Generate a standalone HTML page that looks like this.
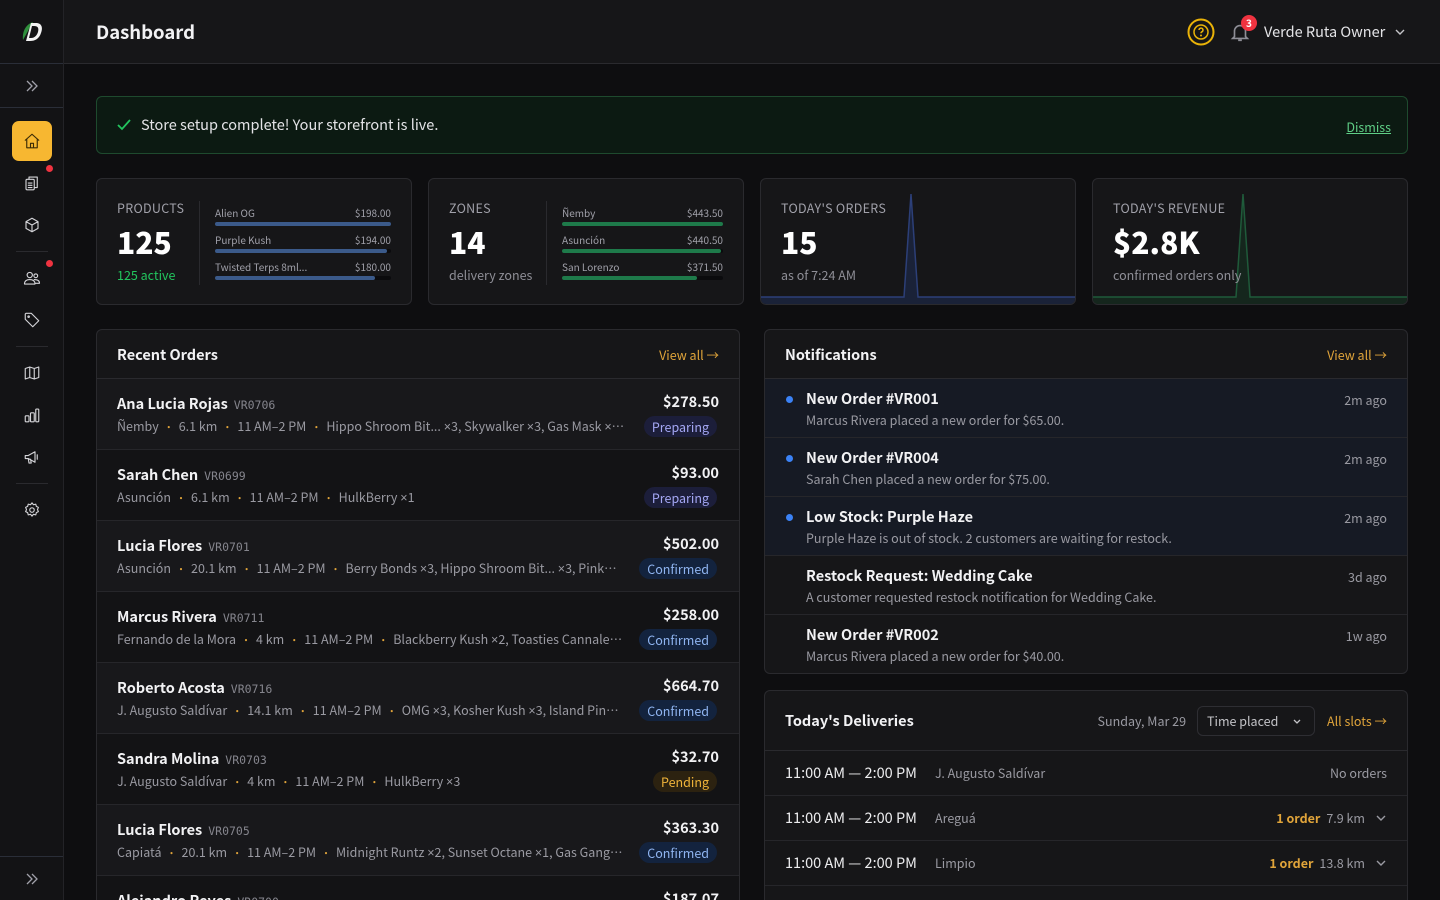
<!DOCTYPE html>
<html><head><meta charset="utf-8"><style>
*{box-sizing:border-box;margin:0;padding:0}
html{width:1440px;height:900px;overflow:hidden}
body{width:1440px;height:900px;overflow:hidden;background:#0e0e10;font-family:"Noto Sans CJK SC","Liberation Sans",sans-serif;color:#e8e8ea;position:relative}
.x{font-family:"Liberation Sans",sans-serif}
.side{position:absolute;left:0;top:0;width:64px;height:900px;background:#131315;border-right:1px solid #232327}
.logo{height:64px;display:flex;align-items:center;justify-content:center;border-bottom:1px solid #2a2e38}
.expand{height:44px;display:flex;align-items:center;justify-content:center;border-bottom:1px solid #2a2e38}
.ic{position:absolute;left:12px;width:40px;height:40px;display:flex;align-items:center;justify-content:center}
.ic svg{width:18px;height:18px;fill:none;stroke:#d4d4d8;stroke-width:1.5;stroke-linecap:round;stroke-linejoin:round}
.dot{position:absolute;width:7px;height:7px;border-radius:50%;background:#ef3340}
.sep{position:absolute;left:16px;width:32px;height:1px;background:#2a2a2e}
.header{position:absolute;left:64px;top:0;right:0;height:64px;background:#161618;border-bottom:1px solid #2a2a2e}
.header h1{position:absolute;left:32px;top:19px;font-size:18.5px;font-weight:700;color:#f2f2f4}
.banner{position:absolute;left:96px;top:96px;width:1312px;height:58px;background:#0c1a12;border:1px solid #1e4a2e;border-radius:6px}
.card{position:absolute;background:#161618;border:1px solid #2a2a2e;border-radius:6px;overflow:hidden}
.cut{border-bottom:none;border-radius:6px 6px 0 0}
.lbl{font-size:12.5px;color:#a1a1aa;letter-spacing:.3px}
.big{font-size:30px;font-weight:800;color:#fff}
.sub{font-size:12.5px;color:#8e8e96}
.bar{position:absolute;font-size:10px;color:#a1a1aa}
.bar .t{position:absolute;left:0;top:0}.bar .v{position:absolute;right:0;top:0}
.bar .tr{position:absolute;left:0;right:0;top:17px;height:4px;background:#0b0b0d;border-radius:2px}
.bar .f{height:4px;border-radius:2px}
.ph{height:49px;border-bottom:1px solid #2a2a2e;display:flex;align-items:center;padding:0 20px;justify-content:space-between}
.ph b{font-size:14.5px;font-weight:700;color:#f2f2f4}
.va{font-size:12.5px;color:#e0a43a}
.row{position:absolute;left:0;right:0;height:71px;border-bottom:1px solid #26262a}
.nm{position:absolute;left:20px;top:14px;font-size:14.5px;font-weight:700;color:#f2f2f4;white-space:nowrap}
.nm span{font-family:"DejaVu Sans Mono","Liberation Mono",monospace;font-weight:400;font-size:11.5px;color:#85858d;margin-left:6px}
.meta{position:absolute;left:20px;top:37px;font-size:12.5px;color:#9a9aa2;white-space:nowrap;width:508px;overflow:hidden;text-overflow:ellipsis}
.meta i{font-style:normal;color:#e0a43a;margin:0 5px;font-size:10px}
.amt{position:absolute;right:20px;top:12px;font-size:14.5px;font-weight:700;color:#f2f2f4}
.pill{position:absolute;right:22px;top:37px;height:21px;padding:0 8px;border-radius:11px;font-size:12.5px;line-height:21px}
.prep{background:#1c1e3a;color:#a5a8f5}.conf{background:#13233e;color:#8fb4f0}.pend{background:#2c2210;color:#f0b43a}
.nr{position:absolute;left:0;right:0;height:59px;border-bottom:1px solid #26262a}
.nr.u{background:#161a24}
.nr .bd{position:absolute;left:21px;top:17px;width:7px;height:7px;border-radius:50%;background:#3b82f6}
.nr .t{position:absolute;left:41px;top:9px;font-size:14.5px;font-weight:700;color:#f2f2f4}
.nr .d{position:absolute;left:41px;top:31px;font-size:12.5px;color:#9a9aa2}
.nr .a{position:absolute;right:20px;top:11px;font-size:12.5px;color:#9a9aa2}
.dr{position:absolute;left:0;right:0;height:45px;border-bottom:1px solid #26262a;font-size:14.5px}
.dr .tm{position:absolute;left:20px;top:11px;color:#ececee}
.dr .z{position:absolute;left:170px;top:12px;font-size:12.5px;color:#9a9aa2}
.dr .r{position:absolute;right:20px;top:12px;font-size:12.5px;color:#9a9aa2;display:flex;align-items:center}
.dr .r b{color:#e0a43a;margin-right:6px}
</style></head><body>
<div class="side">
 <div class="logo"><svg width="28" height="28" viewBox="0 0 28 28"><path d="M5 22 C4 12 9 6 15 4 C12 9 9 15 5 22Z" fill="#2f8f3c"/><path d="M13 5 L18 5 C24 5 25 10 23 15 C21 21 17 23 12 23 L8 23 Z M14 8 L11 20 L13 20 C17 20 19 17 20 14 C21 10 20 8 16 8Z" fill="#f2f2f2"/></svg></div>
 <div class="expand"><svg width="14" height="14" viewBox="0 0 14 14" fill="none" stroke="#a1a1aa" stroke-width="1.3"><path d="M2 2l5 5-5 5M7 2l5 5-5 5"/></svg></div>
 <div class="ic" style="top:121px;background:#f7b731;border-radius:7px"><svg viewBox="0 0 24 24" style="stroke:#3a2a05"><path d="M3 11 12 3l9 8M5 9.5V21h14V9.5M10 21v-6h4v6"/></svg></div>
 <div class="dot" style="left:46px;top:165px"></div>
 <div class="ic" style="top:163px"><svg viewBox="0 0 24 24"><rect x="4" y="7" width="11" height="14" rx="1.5"/><path d="M8 7V4h11v14h-4M7 12h5M7 15h5M7 18h5"/></svg></div>
 <div class="ic" style="top:205px"><svg viewBox="0 0 24 24"><path d="M12 3l8 4.5v9L12 21l-8-4.5v-9zM4 7.5 12 12l8-4.5M12 12v9"/></svg></div>
 <div class="sep" style="top:251px"></div>
 <div class="dot" style="left:46px;top:260px"></div>
 <div class="ic" style="top:258px"><svg viewBox="0 0 24 24"><circle cx="9" cy="8" r="3.5"/><circle cx="17" cy="9" r="2.5"/><path d="M2 20c0-4 3-6 7-6s7 2 7 6zM15 14c4 0 7 1 7 5h-5"/></svg></div>
 <div class="ic" style="top:300px"><svg viewBox="0 0 24 24"><path d="M3 4v7l10 10 8-8L11 3H4z"/><circle cx="7.5" cy="7.5" r="1"/></svg></div>
 <div class="sep" style="top:346px"></div>
 <div class="ic" style="top:353px"><svg viewBox="0 0 24 24"><path d="M3 6l6-2 6 2 6-2v14l-6 2-6-2-6 2zM9 4v14M15 6v14"/></svg></div>
 <div class="ic" style="top:395px"><svg viewBox="0 0 24 24"><rect x="3" y="13" width="5" height="8" rx="1"/><rect x="10" y="9" width="5" height="12" rx="1"/><rect x="17" y="4" width="4" height="17" rx="1"/></svg></div>
 <div class="ic" style="top:437px"><svg viewBox="0 0 24 24"><path d="M3 10v4h4l9 5V5L7 10zM7 14l1 6h3l-1-5M19 9v6"/></svg></div>
 <div class="sep" style="top:483px"></div>
 <div class="ic" style="top:490px"><svg viewBox="0 0 24 24"><circle cx="12" cy="12" r="3"/><path d="M12 2.5l2 2.5 3-.8.8 3 2.7 1.3-1.2 2.9 1.2 2.8-2.7 1.3-.8 3-3-.8-2 2.5-2-2.5-3 .8-.8-3-2.7-1.3 1.2-2.8-1.2-2.9 2.7-1.3.8-3 3 .8z"/></svg></div>
 <div style="position:absolute;left:0;right:0;top:856px;height:44px;border-top:1px solid #2a2e38;display:flex;align-items:center;justify-content:center"><svg width="14" height="14" viewBox="0 0 14 14" fill="none" stroke="#a1a1aa" stroke-width="1.3"><path d="M2 2l5 5-5 5M7 2l5 5-5 5"/></svg></div>
</div>
<div class="header"><h1>Dashboard</h1>
 <svg style="position:absolute;left:1123px;top:18px" width="28" height="28" viewBox="0 0 28 28" fill="none" stroke="#eab308" stroke-width="2"><circle cx="14" cy="14" r="12.5"/><circle cx="14" cy="14" r="7" stroke-width="1.5"/><path d="M12 12a2 2 0 1 1 2.5 2c-.5.3-.5.7-.5 1.3" stroke-width="1.5"/><circle cx="14" cy="17.5" r=".5" stroke-width="1"/></svg>
 <svg style="position:absolute;left:1165px;top:21px" width="22" height="22" viewBox="0 0 24 24" fill="none" stroke="#8e8e96" stroke-width="1.8"><path d="M6 17V11a6 6 0 0 1 12 0v6l2 2H4zM10 21h4"/></svg>
 <div style="position:absolute;left:1177px;top:15px;width:16px;height:16px;border-radius:50%;background:#ef3340;color:#fff;font-size:10px;font-weight:700;text-align:center;line-height:16px">3</div>
 <div style="position:absolute;left:1200px;top:21px;font-size:14.5px;color:#e4e4e7">Verde Ruta Owner</div>
 <svg style="position:absolute;left:1330px;top:27px" width="12" height="10" viewBox="0 0 12 10" fill="none" stroke="#c4c4c8" stroke-width="1.4"><path d="M2 3l4 4 4-4"/></svg>
</div>
<div class="banner">
 <svg style="position:absolute;left:19px;top:21px" width="16" height="14" viewBox="0 0 16 14" fill="none" stroke="#22c55e" stroke-width="1.8"><path d="M2 7l4 4 8-9"/></svg>
 <div style="position:absolute;left:44px;top:17px;font-size:14.5px;color:#e4e4e7">Store setup complete! Your storefront is live.</div>
 <div style="position:absolute;right:16px;top:20px;font-size:12.5px;color:#5fcf86;text-decoration:underline">Dismiss</div>
</div>
<div class="card" style="left:96px;top:178px;width:316px;height:127px">
 <div class="lbl" style="position:absolute;left:20px;top:19px">PRODUCTS</div>
 <div class="big" style="position:absolute;left:20px;top:40px">125</div>
 <div style="position:absolute;left:20px;top:86px;font-size:12.5px;color:#22c55e">125 active</div>
 <div style="position:absolute;left:102px;top:22px;width:1px;height:84px;background:#2a2a2e"></div>
 <div class="bar" style="left:118px;top:26px;width:176px"><span class="t">Alien OG</span><span class="v">$198.00</span><div class="tr"><div class="f" style="width:100%;background:#3b5a8a"></div></div></div>
 <div class="bar" style="left:118px;top:53px;width:176px"><span class="t">Purple Kush</span><span class="v">$194.00</span><div class="tr"><div class="f" style="width:98%;background:#3b5a8a"></div></div></div>
 <div class="bar" style="left:118px;top:80px;width:176px"><span class="t">Twisted Terps 8ml...</span><span class="v">$180.00</span><div class="tr"><div class="f" style="width:91%;background:#3b5a8a"></div></div></div>
</div>
<div class="card" style="left:428px;top:178px;width:316px;height:127px">
 <div class="lbl" style="position:absolute;left:20px;top:19px">ZONES</div>
 <div class="big" style="position:absolute;left:20px;top:40px">14</div>
 <div class="sub" style="position:absolute;left:20px;top:86px">delivery zones</div>
 <div style="position:absolute;left:117px;top:22px;width:1px;height:84px;background:#2a2a2e"></div>
 <div class="bar" style="left:133px;top:26px;width:161px"><span class="t">Ñemby</span><span class="v">$443.50</span><div class="tr"><div class="f" style="width:100%;background:#1e7a4a"></div></div></div>
 <div class="bar" style="left:133px;top:53px;width:161px"><span class="t">Asunción</span><span class="v">$440.50</span><div class="tr"><div class="f" style="width:99%;background:#1e7a4a"></div></div></div>
 <div class="bar" style="left:133px;top:80px;width:161px"><span class="t">San Lorenzo</span><span class="v">$371.50</span><div class="tr"><div class="f" style="width:84%;background:#1e7a4a"></div></div></div>
</div>
<div class="card" style="left:760px;top:178px;width:316px;height:127px">
 <svg style="position:absolute;left:0;top:0" width="316" height="127"><path d="M0 118 L143 118 L150 15 L157 118 L316 118 L316 127 L0 127Z" fill="#1a2238"/><path d="M0 118 L143 118 L150 15 L157 118 L316 118" fill="none" stroke="#2c3f78" stroke-width="1.5"/></svg>
 <div class="lbl" style="position:absolute;left:20px;top:19px">TODAY'S ORDERS</div>
 <div class="big" style="position:absolute;left:20px;top:40px">15</div>
 <div class="sub" style="position:absolute;left:20px;top:86px">as of 7:24 AM</div>
</div>
<div class="card" style="left:1092px;top:178px;width:316px;height:127px">
 <svg style="position:absolute;left:0;top:0" width="316" height="127"><path d="M0 118 L143 118 L150 15 L157 118 L316 118 L316 127 L0 127Z" fill="#15261d"/><path d="M0 118 L143 118 L150 15 L157 118 L316 118" fill="none" stroke="#1f5a3a" stroke-width="1.5"/></svg>
 <div class="lbl" style="position:absolute;left:20px;top:19px">TODAY'S REVENUE</div>
 <div class="big" style="position:absolute;left:20px;top:40px">$2.8K</div>
 <div class="sub" style="position:absolute;left:20px;top:86px">confirmed orders only</div>
</div>
<div class="card cut" style="left:96px;top:329px;width:644px;height:571px">
 <div class="ph"><b>Recent Orders</b><span class="va">View all →</span></div>
 <div class="row" style="top:49px;background:#18181b"><div class="nm">Ana Lucia Rojas<span>VR0706</span></div><div class="meta">Ñemby<i>•</i>6.1 km<i>•</i>11 AM–2 PM<i>•</i>Hippo Shroom Bit... <span class="x">×</span>3, Skywalker <span class="x">×</span>3, Gas Mask <span class="x">×</span>1, +2...</div><div class="amt">$278.50</div><div class="pill prep">Preparing</div></div>
 <div class="row" style="top:120px;background:#131315"><div class="nm">Sarah Chen<span>VR0699</span></div><div class="meta">Asunción<i>•</i>6.1 km<i>•</i>11 AM–2 PM<i>•</i>HulkBerry <span class="x">×</span>1</div><div class="amt">$93.00</div><div class="pill prep">Preparing</div></div>
 <div class="row" style="top:191px;background:#18181b"><div class="nm">Lucia Flores<span>VR0701</span></div><div class="meta">Asunción<i>•</i>20.1 km<i>•</i>11 AM–2 PM<i>•</i>Berry Bonds <span class="x">×</span>3, Hippo Shroom Bit... <span class="x">×</span>3, Pinkman ...</div><div class="amt">$502.00</div><div class="pill conf">Confirmed</div></div>
 <div class="row" style="top:262px;background:#131315"><div class="nm">Marcus Rivera<span>VR0711</span></div><div class="meta">Fernando de la Mora<i>•</i>4 km<i>•</i>11 AM–2 PM<i>•</i>Blackberry Kush <span class="x">×</span>2, Toasties Cannale... <span class="x">×</span>2...</div><div class="amt">$258.00</div><div class="pill conf">Confirmed</div></div>
 <div class="row" style="top:333px;background:#18181b"><div class="nm">Roberto Acosta<span>VR0716</span></div><div class="meta">J. Augusto Saldívar<i>•</i>14.1 km<i>•</i>11 AM–2 PM<i>•</i>OMG <span class="x">×</span>3, Kosher Kush <span class="x">×</span>3, Island Pink <span class="x">×</span>3, ...</div><div class="amt">$664.70</div><div class="pill conf">Confirmed</div></div>
 <div class="row" style="top:404px;background:#131315"><div class="nm">Sandra Molina<span>VR0703</span></div><div class="meta">J. Augusto Saldívar<i>•</i>4 km<i>•</i>11 AM–2 PM<i>•</i>HulkBerry <span class="x">×</span>3</div><div class="amt">$32.70</div><div class="pill pend">Pending</div></div>
 <div class="row" style="top:475px;background:#18181b"><div class="nm">Lucia Flores<span>VR0705</span></div><div class="meta">Capiatá<i>•</i>20.1 km<i>•</i>11 AM–2 PM<i>•</i>Midnight Runtz <span class="x">×</span>2, Sunset Octane <span class="x">×</span>1, Gas Gang 100...</div><div class="amt">$363.30</div><div class="pill conf">Confirmed</div></div>
 <div class="row" style="top:546px;background:#131315;border:none"><div class="nm">Alejandro Reyes<span>VR0700</span></div><div class="amt">$187.07</div></div>
</div>
<div class="card" style="left:764px;top:329px;width:644px;height:345px">
 <div class="ph"><b>Notifications</b><span class="va">View all →</span></div>
 <div class="nr u" style="top:49px"><div class="bd"></div><div class="t">New Order #VR001</div><div class="d">Marcus Rivera placed a new order for $65.00.</div><div class="a">2m ago</div></div>
 <div class="nr u" style="top:108px"><div class="bd"></div><div class="t">New Order #VR004</div><div class="d">Sarah Chen placed a new order for $75.00.</div><div class="a">2m ago</div></div>
 <div class="nr u" style="top:167px"><div class="bd"></div><div class="t">Low Stock: Purple Haze</div><div class="d">Purple Haze is out of stock. 2 customers are waiting for restock.</div><div class="a">2m ago</div></div>
 <div class="nr" style="top:226px"><div class="t">Restock Request: Wedding Cake</div><div class="d">A customer requested restock notification for Wedding Cake.</div><div class="a">3d ago</div></div>
 <div class="nr" style="top:285px;border:none"><div class="t">New Order #VR002</div><div class="d">Marcus Rivera placed a new order for $40.00.</div><div class="a">1w ago</div></div>
</div>
<div class="card cut" style="left:764px;top:690px;width:644px;height:210px">
 <div class="ph" style="height:60px"><b>Today's Deliveries</b>
  <div style="display:flex;align-items:center">
   <span style="font-size:12.5px;color:#9a9aa2;margin-right:11px">Sunday, Mar 29</span>
   <span style="display:inline-block;width:118px;height:30px;border:1px solid #2e2e33;border-radius:6px;font-size:12.5px;color:#c4c4c8;line-height:28px;padding-left:9px;position:relative;margin-right:12px">Time placed<svg style="position:absolute;right:12px;top:11px" width="10" height="8" viewBox="0 0 10 8" fill="none" stroke="#c4c4c8" stroke-width="1.3"><path d="M2 2l3 3 3-3"/></svg></span>
   <span class="va">All slots →</span></div></div>
 <div class="dr" style="top:60px"><span class="tm">11:00 AM — 2:00 PM</span><span class="z">J. Augusto Saldívar</span><span class="r">No orders</span></div>
 <div class="dr" style="top:105px"><span class="tm">11:00 AM — 2:00 PM</span><span class="z">Areguá</span><span class="r"><b>1 order</b>7.9 km<svg style="margin-left:10px" width="12" height="10" viewBox="0 0 12 10" fill="none" stroke="#9a9aa2" stroke-width="1.4"><path d="M2 3l4 4 4-4"/></svg></span></div>
 <div class="dr" style="top:150px"><span class="tm">11:00 AM — 2:00 PM</span><span class="z">Limpio</span><span class="r"><b>1 order</b>13.8 km<svg style="margin-left:10px" width="12" height="10" viewBox="0 0 12 10" fill="none" stroke="#9a9aa2" stroke-width="1.4"><path d="M2 3l4 4 4-4"/></svg></span></div>
</div>
</body></html>
